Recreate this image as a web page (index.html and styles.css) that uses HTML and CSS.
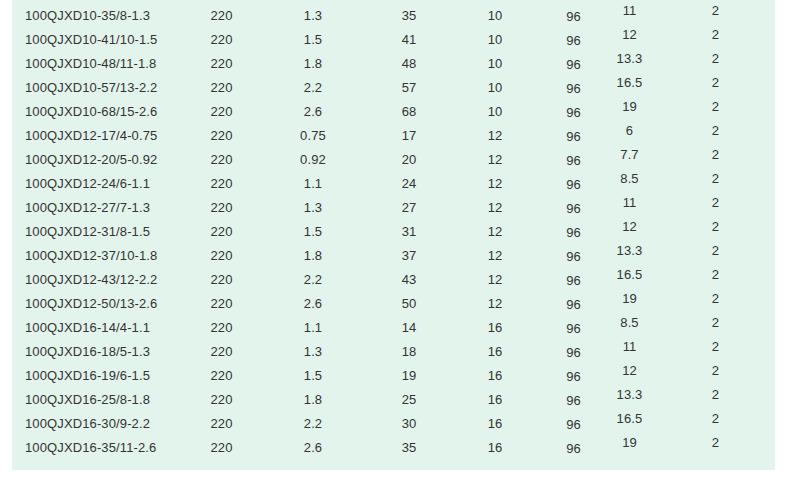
FILE: index.html
```html
<!DOCTYPE html>
<html>
<head>
<meta charset="utf-8">
<link rel="stylesheet" href="styles.css">
</head>
<body>
<div class="panel">
  <div class="row"><div class="c1">100QJXD10-35/8-1.3</div><div class="c2">220</div><div class="c3">1.3</div><div class="c4">35</div><div class="c5">10</div><div class="c6">96</div><div class="c7">11</div><div class="c8">2</div></div>
  <div class="row"><div class="c1">100QJXD10-41/10-1.5</div><div class="c2">220</div><div class="c3">1.5</div><div class="c4">41</div><div class="c5">10</div><div class="c6">96</div><div class="c7">12</div><div class="c8">2</div></div>
  <div class="row"><div class="c1">100QJXD10-48/11-1.8</div><div class="c2">220</div><div class="c3">1.8</div><div class="c4">48</div><div class="c5">10</div><div class="c6">96</div><div class="c7">13.3</div><div class="c8">2</div></div>
  <div class="row"><div class="c1">100QJXD10-57/13-2.2</div><div class="c2">220</div><div class="c3">2.2</div><div class="c4">57</div><div class="c5">10</div><div class="c6">96</div><div class="c7">16.5</div><div class="c8">2</div></div>
  <div class="row"><div class="c1">100QJXD10-68/15-2.6</div><div class="c2">220</div><div class="c3">2.6</div><div class="c4">68</div><div class="c5">10</div><div class="c6">96</div><div class="c7">19</div><div class="c8">2</div></div>
  <div class="row"><div class="c1">100QJXD12-17/4-0.75</div><div class="c2">220</div><div class="c3">0.75</div><div class="c4">17</div><div class="c5">12</div><div class="c6">96</div><div class="c7">6</div><div class="c8">2</div></div>
  <div class="row"><div class="c1">100QJXD12-20/5-0.92</div><div class="c2">220</div><div class="c3">0.92</div><div class="c4">20</div><div class="c5">12</div><div class="c6">96</div><div class="c7">7.7</div><div class="c8">2</div></div>
  <div class="row"><div class="c1">100QJXD12-24/6-1.1</div><div class="c2">220</div><div class="c3">1.1</div><div class="c4">24</div><div class="c5">12</div><div class="c6">96</div><div class="c7">8.5</div><div class="c8">2</div></div>
  <div class="row"><div class="c1">100QJXD12-27/7-1.3</div><div class="c2">220</div><div class="c3">1.3</div><div class="c4">27</div><div class="c5">12</div><div class="c6">96</div><div class="c7">11</div><div class="c8">2</div></div>
  <div class="row"><div class="c1">100QJXD12-31/8-1.5</div><div class="c2">220</div><div class="c3">1.5</div><div class="c4">31</div><div class="c5">12</div><div class="c6">96</div><div class="c7">12</div><div class="c8">2</div></div>
  <div class="row"><div class="c1">100QJXD12-37/10-1.8</div><div class="c2">220</div><div class="c3">1.8</div><div class="c4">37</div><div class="c5">12</div><div class="c6">96</div><div class="c7">13.3</div><div class="c8">2</div></div>
  <div class="row"><div class="c1">100QJXD12-43/12-2.2</div><div class="c2">220</div><div class="c3">2.2</div><div class="c4">43</div><div class="c5">12</div><div class="c6">96</div><div class="c7">16.5</div><div class="c8">2</div></div>
  <div class="row"><div class="c1">100QJXD12-50/13-2.6</div><div class="c2">220</div><div class="c3">2.6</div><div class="c4">50</div><div class="c5">12</div><div class="c6">96</div><div class="c7">19</div><div class="c8">2</div></div>
  <div class="row"><div class="c1">100QJXD16-14/4-1.1</div><div class="c2">220</div><div class="c3">1.1</div><div class="c4">14</div><div class="c5">16</div><div class="c6">96</div><div class="c7">8.5</div><div class="c8">2</div></div>
  <div class="row"><div class="c1">100QJXD16-18/5-1.3</div><div class="c2">220</div><div class="c3">1.3</div><div class="c4">18</div><div class="c5">16</div><div class="c6">96</div><div class="c7">11</div><div class="c8">2</div></div>
  <div class="row"><div class="c1">100QJXD16-19/6-1.5</div><div class="c2">220</div><div class="c3">1.5</div><div class="c4">19</div><div class="c5">16</div><div class="c6">96</div><div class="c7">12</div><div class="c8">2</div></div>
  <div class="row"><div class="c1">100QJXD16-25/8-1.8</div><div class="c2">220</div><div class="c3">1.8</div><div class="c4">25</div><div class="c5">16</div><div class="c6">96</div><div class="c7">13.3</div><div class="c8">2</div></div>
  <div class="row"><div class="c1">100QJXD16-30/9-2.2</div><div class="c2">220</div><div class="c3">2.2</div><div class="c4">30</div><div class="c5">16</div><div class="c6">96</div><div class="c7">16.5</div><div class="c8">2</div></div>
  <div class="row"><div class="c1">100QJXD16-35/11-2.6</div><div class="c2">220</div><div class="c3">2.6</div><div class="c4">35</div><div class="c5">16</div><div class="c6">96</div><div class="c7">19</div><div class="c8">2</div></div>
</div>
</body>
</html>
```
FILE: styles.css
```css
html, body {
  margin: 0;
  padding: 0;
  background: #ffffff;
}
body {
  font-family: "Liberation Sans", Arial, sans-serif;
  font-size: 13px;
  letter-spacing: 0.12px;
  color: #333333;
}
.panel {
  margin-left: 12px;
  width: 763px;
  background: #e3f4ec;
  padding: 4px 0 10px 0;
}
.row {
  display: grid;
  grid-template-columns: 168px 83px 100px 92px 80px 77px 35px 128px;
  height: 24px;
  line-height: 24px;
}
.row > div {
  text-align: center;
  white-space: nowrap;
}
.row > .c1 {
  text-align: left;
  padding-left: 13px;
}
.row > .c6 {
  line-height: 26px;
}
.row > .c7,
.row > .c8 {
  line-height: 14px;
}
.row > .c8 {
  padding-left: 9px;
}
```
